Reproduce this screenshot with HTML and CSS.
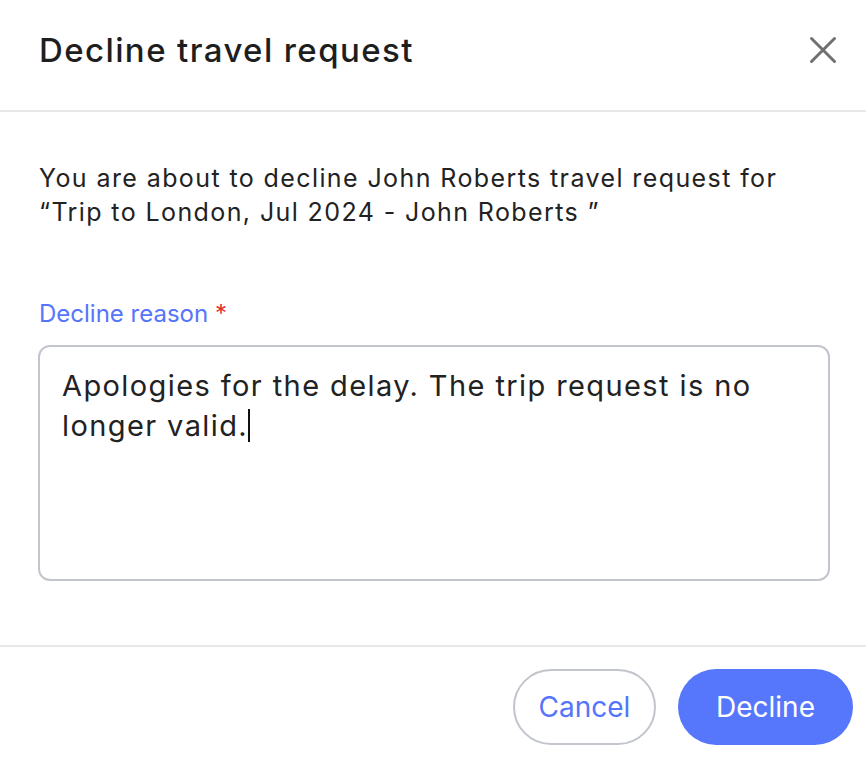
FILE: index.html
```html
<!DOCTYPE html>
<html>
<head>
<meta charset="utf-8">
<link rel="stylesheet" href="styles.css">
</head>
<body>
<div class="modal">
  <header class="header">
    <h1 class="title">Decline travel request</h1>
    <button class="close" aria-label="Close">
      <svg width="28" height="28" viewBox="0 0 28 28"><path d="M2.5 2.5L25.5 25.5M25.5 2.5L2.5 25.5" stroke="#707070" stroke-width="3" stroke-linecap="round" fill="none"/></svg>
    </button>
  </header>
  <section class="content">
    <p class="intro">You are about to decline John Roberts travel request for<br>“Trip to London, Jul 2024 - John Roberts ”</p>
    <label class="label">Decline reason <span class="req">*</span></label>
    <div class="field">Apologies for the delay. The trip request is no longer valid.<span class="caret"></span></div>
  </section>
  <footer class="footer">
    <button class="btn btn-secondary">Cancel</button>
    <button class="btn btn-primary">Decline</button>
  </footer>
</div>
</body>
</html>
```
FILE: styles.css
```css
* { box-sizing: border-box; }
html, body { margin: 0; padding: 0; background: #fff; }
body { font-family: Inter, "Noto Sans", sans-serif; color: #1f1f1f; }
.modal { width: 866px; height: 760px; display: flex; flex-direction: column; }
.header {
  height: 112px;
  padding: 0 29px 10px 39px;
  display: flex; align-items: center; justify-content: space-between;
  border-bottom: 2px solid #e8e8e8;
}
.title { margin: 0; font-size: 33px; font-weight: 500; color: #1e1e1e; letter-spacing: 1.4px; }
.close { background: none; border: 0; padding: 0; width: 28px; height: 28px; display: flex; }
.content { padding: 49px 30px 0 38px; height: 535px; border-bottom: 2px solid #e8e8e8; }
.intro { margin: 0 0 0 1px; font-size: 25px; line-height: 34px; color: #222; letter-spacing: 1.4px; white-space: nowrap; }
.label { display: block; margin: 70px 0 0 1px; font-size: 24px; line-height: 30px; color: #5575fa; }
.req { color: #e3322b; }
.field {
  margin-top: 16px;
  height: 236px;
  width: 792px;
  border: 2px solid #c3c5cd;
  border-radius: 12px;
  padding: 19px 60px 0 22px;
  font-size: 29px; line-height: 40px; color: #222; letter-spacing: 1.4px;
}
.caret { display: inline-block; width: 2px; height: 33px; background: #111; vertical-align: -6px; margin-left: 0; }
.footer { flex: 1; display: flex; justify-content: flex-end; align-items: flex-start; gap: 22px; padding: 22px 13px 0 0; }
.btn { font-family: Inter, "Noto Sans", sans-serif; font-size: 28px; border-radius: 40px; height: 76px; cursor: pointer; }
.btn-secondary { width: 143px; background: #fff; border: 2px solid #c3c5cd; color: #5575fa; }
.btn-primary { width: 175px; background: #5677fb; border: 0; color: #fff; }
```
